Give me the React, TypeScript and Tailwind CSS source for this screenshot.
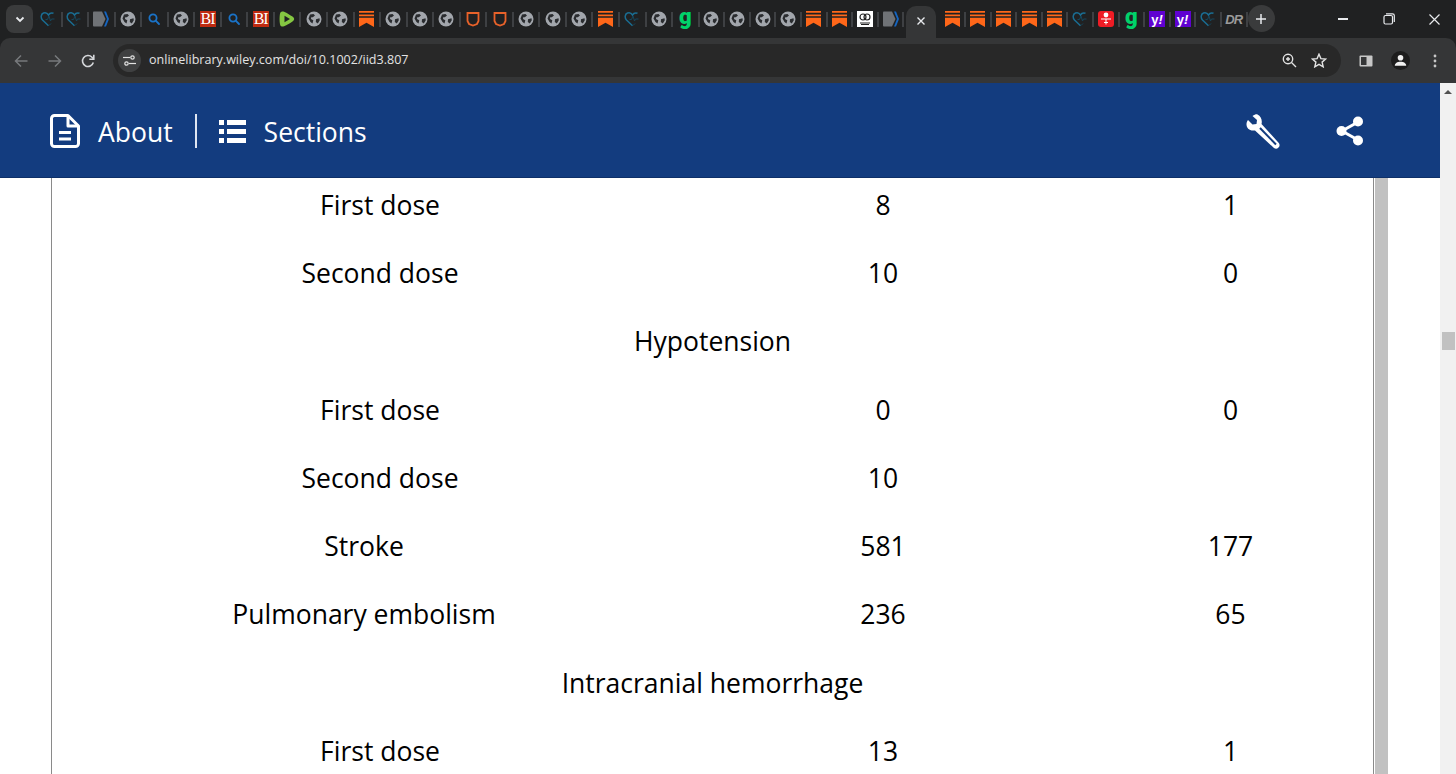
import React from 'react';

type Fav = 'heart' | 'dart' | 'globe' | 'search' | 'bi' | 'rumble' | 'mark' | 'shield' | 'g' | 'book' | 'red' | 'yahoo' | 'dr';

const group1: Fav[] = ['heart', 'heart', 'dart', 'globe', 'search', 'globe', 'bi', 'search', 'bi', 'rumble', 'globe', 'globe', 'mark', 'globe', 'globe', 'globe', 'shield', 'shield', 'globe', 'globe', 'globe', 'mark', 'heart', 'globe', 'g'];
const group2: Fav[] = ['globe', 'globe', 'globe', 'globe', 'mark', 'mark', 'book', 'dart'];
const group3: Fav[] = ['mark', 'mark', 'mark', 'mark', 'mark', 'heart', 'red', 'g', 'yahoo', 'yahoo', 'heart', 'dr'];

function Favicon({ kind }: { kind: Fav }) {
  if (kind === 'globe') {
    return (
      <svg width="16" height="16" viewBox="0 0 16 16">
        <circle cx="8" cy="8" r="7.5" fill="#a2a6ac" />
        <path d="M4 3.500 7.500 3 9 4.500 6.800 6.300 5.200 6.200 5 8 7.300 9.300 6.500 12.500 4.500 11 2.500 7.500ZM10 8.300l3.500-1 .3 2-2 3.200-2-1.500Z" fill="#2a2c2f" />
      </svg>
    );
  }
  if (kind === 'heart') {
    return (
      <svg width="17" height="16" viewBox="0 0 17 16" fill="none">
        <path d="M8.500 14.800 2.500 9C.5 6.800.8 3 3.500 2 5.500 1.300 7.500 2.300 8.500 4 9.500 2.300 11.500 1.500 13.500 2.300" stroke="#1a6d92" strokeWidth="1.500" />
        <path d="M9 14.500 11 12.500M5.500 8.500h2L9 5l1.500 5L11.500 8h3" stroke="#16475c" strokeWidth="1" />
      </svg>
    );
  }
  if (kind === 'dart') {
    return (
      <svg width="16" height="16" viewBox="0 0 16 16">
        <path d="M0 1.500C0 1 .5.500 1 .500H9L12.500 8 9 15.500H1C.5 15.500 0 15 0 14.500Z" fill="#6f7276" />
        <path d="M11 .500H13L16 8 13 15.500H11L14 8Z" fill="#1565c0" />
      </svg>
    );
  }
  if (kind === 'search') {
    return (
      <svg width="16" height="16" viewBox="0 0 16 16" fill="none" stroke="#1a73c8" strokeWidth="1.800">
        <circle cx="7" cy="7" r="3.600" />
        <path d="M9.700 9.700 13 13" strokeLinecap="round" />
      </svg>
    );
  }
  if (kind === 'bi') {
    return (
      <div className="flex h-4 w-4 items-center justify-center bg-[#bf2a10] font-['Liberation_Serif',serif] text-[16px] leading-none tracking-[-1px] text-white">
        BI
      </div>
    );
  }
  if (kind === 'rumble') {
    return (
      <svg width="16" height="16" viewBox="0 0 16 16">
        <path d="M3 .500C5 .200 8 2 13.500 5.500 15.800 7 15.800 9 13.500 10.500 8 14 5 15.800 3 15.500 1.500 15.300 1 14 .800 12 .500 9 .500 7 .800 4 1 2 1.500.800 3 .500Z" fill="#85c742" />
        <path d="M5.500 4.800 11 8 5.500 11.200Z" fill="#202124" />
      </svg>
    );
  }
  if (kind === 'mark') {
    return (
      <svg width="15" height="16" viewBox="0 0 15 16" fill="#ff6719">
        <path d="M0 0h15v1.800H0ZM0 3.400h15v1.800H0ZM0 6.800h15V16L7.500 11.800 0 16Z" />
      </svg>
    );
  }
  if (kind === 'shield') {
    return (
      <svg width="16" height="16" viewBox="0 0 16 16" fill="none">
        <path d="M2.500 2h11v8L12 13l-4 1.500L4 13 2.500 10Z" stroke="#e8622a" strokeWidth="1.800" />
      </svg>
    );
  }
  if (kind === 'g') {
    return <div className="flex h-4 w-4 items-center justify-center pb-[5px] font-['Roboto',sans-serif] text-[22px] leading-none font-black text-[#00d26a]">g</div>;
  }
  if (kind === 'book') {
    return (
      <div className="flex h-4 w-4 items-center justify-center bg-white">
        <svg width="14" height="14" viewBox="0 0 14 14" fill="none" stroke="#222" strokeWidth="1.200">
          <circle cx="5" cy="5" r="3" />
          <circle cx="9" cy="5" r="3" />
          <path d="M2 11h10M3 12.500h8" />
        </svg>
      </div>
    );
  }
  if (kind === 'red') {
    return (
      <div className="flex h-4 w-4 items-center justify-center rounded-[3px] bg-[#ee1c25]">
        <svg width="12" height="14" viewBox="0 0 12 14" fill="#fff">
          <circle cx="6" cy="3" r="2.400" />
          <path d="M1 6.500h10v1H6.500V10H8v1H6.500v1.500h-1V11H4v-1h1.500V7.500H1Z" />
        </svg>
      </div>
    );
  }
  if (kind === 'yahoo') {
    return (
      <div className="flex h-4 w-4 items-center justify-center bg-[#5f01d1] font-['Liberation_Sans',sans-serif] text-[13px] leading-none font-bold text-white">
        y<span className="italic">!</span>
      </div>
    );
  }
  return <div className="flex h-4 w-4 items-center justify-center font-['Liberation_Sans',sans-serif] text-[13px] leading-none font-bold tracking-[-1px] italic text-[#9a9a9a]">DR</div>;
}

function Tab({ kind, pitch }: { kind: Fav; pitch: string }) {
  return (
    <div className={`flex shrink-0 items-center justify-between ${pitch}`}>
      <div className="flex flex-1 justify-center">
        <Favicon kind={kind} />
      </div>
      <div className="h-[15px] w-[2px] shrink-0 bg-[#3e4043]" />
    </div>
  );
}

function Chrome() {
  return (
    <div className="shrink-0 bg-[#202122]">
      {/* tab strip */}
      <div className="flex h-[38px] items-start pl-[6px]">
        <div className="mt-[5px] flex h-[28px] w-[27px] items-center justify-center rounded-lg bg-[#3a3b3c]">
          <svg width="10" height="7" viewBox="0 0 10 7" fill="none" stroke="#e8eaed" strokeWidth="1.800">
            <path d="M1.500 1.500 5 5l3.500-3.500" />
          </svg>
        </div>
        <div className="mt-[11px] flex pl-[3px]">
          {group1.map((f, i) => (
            <Tab key={i} kind={f} pitch="w-[26.55px]" />
          ))}
          {group2.map((f, i) => (
            <Tab key={i} kind={f} pitch="w-[25.6px]" />
          ))}
        </div>
        <div className="mt-[6px] ml-[2px] flex h-[32px] w-[30px] shrink-0 items-center justify-center rounded-t-[10px] bg-[#353637] pb-[2px]">
          <svg width="10" height="10" viewBox="0 0 10 10" stroke="#e8eaed" strokeWidth="1.400">
            <path d="M1.500 1.500l7 7M8.500 1.500l-7 7" />
          </svg>
        </div>
        <div className="mt-[11px] flex pl-[4px]">
          {group3.map((f, i) => (
            <Tab key={i} kind={f} pitch="w-[25.6px]" />
          ))}
        </div>
        <div className="mt-[5px] flex h-[27px] w-[27px] items-center justify-center rounded-full bg-[#3a3b3c]">
          <svg width="12" height="12" viewBox="0 0 12 12" stroke="#e8eaed" strokeWidth="1.500">
            <path d="M6 1v10M1 6h10" />
          </svg>
        </div>
        <div className="ml-auto flex h-[38px] items-center">
          <div className="flex w-[46px] justify-center">
            <div className="h-[1.500px] w-[10px] bg-[#e8eaed]" />
          </div>
          <div className="flex w-[46px] justify-center">
            <svg width="12" height="12" viewBox="0 0 12 12" fill="none" stroke="#e8eaed" strokeWidth="1.200">
              <rect x="1" y="2.500" width="8.500" height="8.500" rx="1.500" />
              <path d="M3 .800h6.500c1 0 1.800.800 1.800 1.800V9" />
            </svg>
          </div>
          <div className="flex w-[44px] justify-center">
            <svg width="11" height="11" viewBox="0 0 11 11" stroke="#e8eaed" strokeWidth="1.200">
              <path d="M.500.500l10 10M10.500.500l-10 10" />
            </svg>
          </div>
        </div>
      </div>
      {/* toolbar */}
      <div className="flex h-[45px] items-center rounded-t-[10px] bg-[#353637] pl-[14px]">
        <svg width="14" height="14" viewBox="0 0 14 14" fill="none" stroke="#77797c" strokeWidth="1.500">
          <path d="M13.500 7H1.500M7 1.500 1.500 7 7 12.500" />
        </svg>
        <svg className="ml-[20px]" width="14" height="14" viewBox="0 0 14 14" fill="none" stroke="#77797c" strokeWidth="1.500">
          <path d="M.500 7h12M7 1.500 12.500 7 7 12.500" />
        </svg>
        <svg className="ml-[19px]" width="14" height="14" viewBox="0 0 14 14" fill="none" stroke="#d5d7da" strokeWidth="1.600">
          <path d="M12.300 8.500A5.500 5.500 0 1 1 11 3.200L12.500 5" />
          <path d="M12.800.800V5.300H8.300" />
        </svg>
        <div className="ml-[18px] flex h-[33px] w-[1228px] items-center rounded-full bg-[#282828] pl-[5px]">
          <div className="flex h-[23px] w-[23px] items-center justify-center rounded-full bg-[#3f4041]">
            <svg width="13" height="11" viewBox="0 0 13 11" fill="none" stroke="#e3e3e3" strokeWidth="1.200">
              <path d="M0 2.500h7" />
              <circle cx="9.500" cy="2.500" r="1.700" />
              <path d="M13 8.500H6" />
              <circle cx="3.500" cy="8.500" r="1.700" />
            </svg>
          </div>
          <span className="ml-[8px] font-['Open_Sans',sans-serif] text-[12.55px] leading-none text-[#e3e3e3]">onlinelibrary.wiley.com/doi/10.1002/iid3.807</span>
          <svg className="ml-auto" width="15" height="15" viewBox="0 0 15 15" fill="none" stroke="#e3e3e3" strokeWidth="1.400">
            <circle cx="6" cy="6" r="4.700" />
            <path d="M9.500 9.500 14 14M4 6h4M6 4v4" />
          </svg>
          <svg className="mr-[14px] ml-[14px]" width="16" height="15" viewBox="0 0 16 15" fill="none" stroke="#e3e3e3" strokeWidth="1.400">
            <path d="M8 1.200 9.900 5.600l4.800.400-3.600 3.100 1.100 4.700L8 11.300l-4.200 2.500 1.100-4.700L1.300 6l4.800-.400Z" />
          </svg>
        </div>
        <svg className="ml-[18px]" width="14" height="12" viewBox="0 0 14 12">
          <rect x=".500" y=".500" width="13" height="11" rx="1" fill="#c7c7c7" />
          <rect x="2" y="2" width="5.500" height="8" fill="#353637" />
        </svg>
        <div className="ml-[18px] flex h-[19px] w-[19px] items-center justify-center rounded-full bg-[#1d1d1d]">
          <svg width="13" height="13" viewBox="0 0 13 13" fill="#f1f1f1">
            <circle cx="6.500" cy="3.700" r="2.800" />
            <path d="M.800 11.800c0-2.500 2.500-4 5.700-4s5.700 1.500 5.700 4Z" />
          </svg>
        </div>
        <svg className="ml-[23px]" width="4" height="14" viewBox="0 0 4 14" fill="#c7c7c7">
          <circle cx="2" cy="2" r="1.400" />
          <circle cx="2" cy="7" r="1.400" />
          <circle cx="2" cy="12" r="1.400" />
        </svg>
      </div>
    </div>
  );
}

function Row({ label, a, b, indent }: { label: string; a: string; b?: string; indent?: boolean }) {
  return (
    <div className="grid h-[68.25px] grid-cols-[624px_414px_281px] items-center text-center">
      <div className={indent ? 'pl-[32px]' : ''}>{label}</div>
      <div>{a}</div>
      <div>{b}</div>
    </div>
  );
}

function Heading({ label }: { label: string }) {
  return <div className="flex h-[68.25px] items-center justify-center">{label}</div>;
}

export default function App() {
  return (
    <div className="flex h-screen flex-col overflow-hidden bg-white font-['Open_Sans',sans-serif]">
      <Chrome />
      <div className="flex min-h-0 flex-1">
        <div className="flex min-w-0 flex-1 flex-col">
          <header className="relative z-10 flex h-[95px] shrink-0 items-center border-b border-[#0e3068] bg-[#133c7f] pt-[2px] pr-[76px] pl-[50px] text-[26.5px] text-white">
            <svg width="30" height="34" viewBox="0 0 30 34" fill="none" stroke="#fff" strokeWidth="3" strokeLinejoin="round">
              <path d="M18 1.500H4.500a3 3 0 0 0-3 3v25a3 3 0 0 0 3 3h21a3 3 0 0 0 3-3V12Z" />
              <path d="M18 1.500V12h10.500" />
              <path d="M9 18.500h12M9 25h12" />
            </svg>
            <span className="ml-[18px] pt-[3px]">About</span>
            <div className="ml-[22px] h-[34px] w-[2px] bg-[#dfe6f2]" />
            <svg className="ml-[22px]" width="27" height="23" viewBox="0 0 27 23" fill="#fff">
              <path d="M0 0h5v5H0ZM8 0h19v5H8ZM0 9h5v5H0ZM8 9h19v5H8ZM0 18h5v5H0ZM8 18h19v5H8Z" />
            </svg>
            <span className="ml-[18px] pt-[3px]">Sections</span>
            <svg className="ml-auto" width="36" height="36" viewBox="0 0 36 36" fill="none">
              <path d="M12.500 1.500c-1-.400-3 0-5 1.500L12 7l-.5 4-4 .5-4.500-4.500C1.500 9 1 11.500 2 14c1.500 3 5 4 8 3.500L29 35c1.500 1 3 1 4.500-.5 1.500-1.500 1.300-3.200.3-4.500L16.500 11c1-3.500-.5-8-4-9.500Z" fill="#fff" />
              <path d="M15 15 31 31.500" stroke="#133c7f" strokeWidth="2" />
            </svg>
            <svg className="ml-[55px]" width="28" height="30" viewBox="0 0 28 30" fill="none">
              <path d="M22 6 6 15l16 9" stroke="#fff" strokeWidth="3" />
              <circle cx="22" cy="5.500" r="5" fill="#fff" />
              <circle cx="5.500" cy="15" r="5" fill="#fff" />
              <circle cx="22" cy="24.500" r="5" fill="#fff" />
            </svg>
          </header>
          <div className="flex min-h-0 flex-1 pl-[51px]">
            <div className="h-full w-[1323px] shrink-0 border-x border-[#8a8a8a] text-[26.5px] leading-none text-black">
              <div className="-mt-[7px]">
                <Row label="First dose" a="8" b="1" indent />
                <Row label="Second dose" a="10" b="0" indent />
                <Heading label="Hypotension" />
                <Row label="First dose" a="0" b="0" indent />
                <Row label="Second dose" a="10" indent />
                <Row label="Stroke" a="581" b="177" />
                <Row label="Pulmonary embolism" a="236" b="65" />
                <Heading label="Intracranial hemorrhage" />
                <Row label="First dose" a="13" b="1" indent />
              </div>
            </div>
            <div className="ml-px h-full w-[13px] shrink-0 bg-[#c1c1c1]" />
          </div>
        </div>
        <aside className="flex w-4 shrink-0 flex-col items-center bg-[#f1f1f1]">
          <div className="mt-[7px] h-0 w-0 border-x-[4px] border-b-[4px] border-x-transparent border-b-[#505050]" />
          <div className="mt-[238px] h-[18px] w-[13px] bg-[#c1c1c1]" />
        </aside>
      </div>
    </div>
  );
}
